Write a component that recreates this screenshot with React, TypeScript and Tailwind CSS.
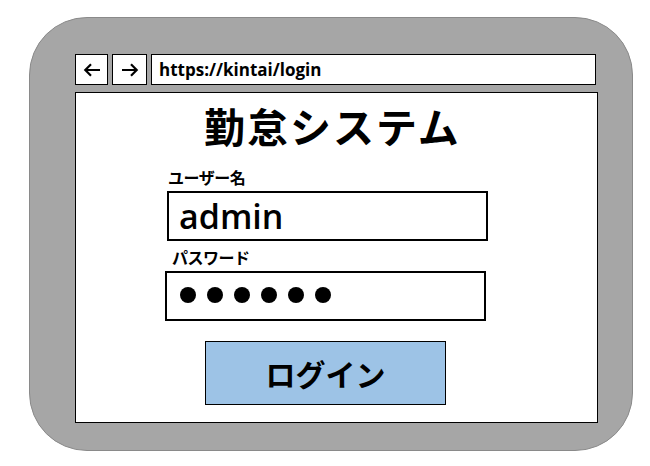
export default function App() {
  return (
    <main className="w-[650px] h-[466px] bg-white font-['Open_Sans','Noto_Sans_CJK_JP',sans-serif] text-black">
      <div className="ml-[29px] mt-[17px] w-[604px] h-[434px] pl-[45px] pr-[36px] pt-[36px] rounded-[58px] border border-[#8a8a8a] bg-[#a6a6a6] flex flex-col">
        {/* address bar */}
        <div className="flex items-stretch gap-[4px] h-[31px]">
          <div className="w-[33px] bg-white border border-black flex items-center justify-center">
            <svg width="18" height="14" viewBox="0 0 18 14" fill="none" stroke="black" strokeWidth="2.2">
              <path d="M17 7H2.5M8 1.3 2.3 7 8 12.7" />
            </svg>
          </div>
          <div className="w-[35px] bg-white border border-black flex items-center justify-center">
            <svg width="18" height="14" viewBox="0 0 18 14" fill="none" stroke="black" strokeWidth="2.2">
              <path d="M1 7h14.5M10 1.3 15.7 7 10 12.7" />
            </svg>
          </div>
          <div className="flex-1 bg-white border-[1.5px] border-black flex items-center pl-[7px]">
            <span className="text-[17px] font-bold leading-none">https://kintai/login</span>
          </div>
        </div>

        {/* page */}
        <div className="mt-[7px] w-[523px] h-[331px] bg-white border border-black flex flex-col">
          <h1 className="ml-[128px] mt-[12px] text-[41px] font-bold leading-none tracking-[2px] font-['Noto_Sans_CJK_JP',sans-serif]">
            勤怠システム
          </h1>

          <span className="ml-[92px] mt-[23px] text-[16px] font-bold leading-none tracking-[-0.5px] font-['Noto_Sans_CJK_JP',sans-serif]">
            ユーザー名
          </span>
          <div className="ml-[91px] mt-[6px] w-[321px] h-[50px] border-2 border-black flex items-center pl-[10px]">
            <span className="text-[34px] font-semibold leading-none">admin</span>
          </div>

          <span className="ml-[96px] mt-[8px] text-[16px] font-bold leading-none tracking-[-0.5px] font-['Noto_Sans_CJK_JP',sans-serif]">
            パスワード
          </span>
          <div className="ml-[89px] mt-[6px] w-[321px] h-[50px] border-2 border-black flex items-center gap-[11px] pl-[13px] pb-[3px]">
            {[0, 1, 2, 3, 4, 5].map(i => (
              <span key={i} className="w-[16px] h-[16px] rounded-full bg-black" />
            ))}
          </div>

          <div className="ml-[129px] mt-[20px] w-[241px] h-[64px] bg-[#9dc3e6] border border-black flex items-center justify-center">
            <span className="text-[30px] font-bold leading-none font-['Noto_Sans_CJK_JP',sans-serif]">ログイン</span>
          </div>
        </div>
      </div>
    </main>
  );
}
